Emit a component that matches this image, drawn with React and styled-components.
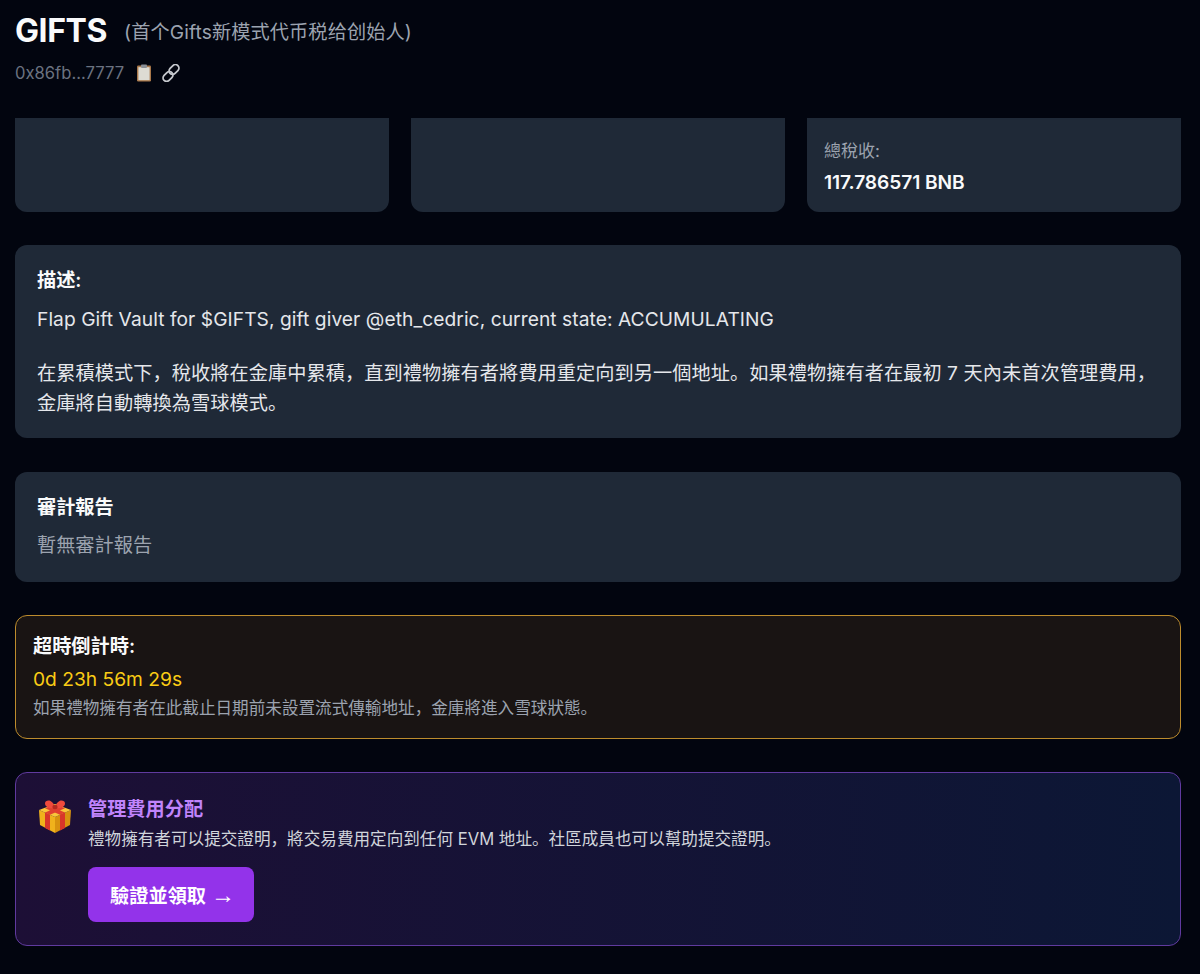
import React from "react"
import styled, { createGlobalStyle } from "styled-components"

const FONT = `Inter, "Noto Sans CJK SC", "Noto Sans CJK TC", sans-serif`

const GlobalStyle = createGlobalStyle`
  html, body {
    margin: 0;
    height: 974px;
    overflow: hidden;
    background: #02050f;
    font-family: ${FONT};
    color: #fff;
  }
  * { box-sizing: border-box; }
`

const Page = styled.div`
  height: 974px;
  overflow: hidden;
  display: flex;
  flex-direction: column;
  background: #02050f;
`

const Header = styled.header`
  height: 118px;
  flex: none;
  padding: 10px 19px 0 15px;
`

const TitleRow = styled.div`
  display: flex;
  align-items: center;
  height: 42px;
`

const Title = styled.h1`
  margin: 0;
  font-size: 32px;
  font-weight: 700;
  line-height: 42px;
  letter-spacing: -0.4px;
  color: #f9fafb;
`

const Subtitle = styled.span`
  margin-left: 17px;
  font-size: 19.2px;
  letter-spacing: 0.1px;
  color: #9ca3af;
`

const AddressRow = styled.div`
  display: flex;
  align-items: center;
  margin-top: 11px;
  height: 20px;
`

const Address = styled.span`
  font-size: 16.6px;
  color: #6b7280;
`

const IconSlot = styled.span`
  display: inline-flex;
  margin-left: ${p => p.$gap}px;
`

const Main = styled.main`
  flex: 1;
  padding: 0 19px 0 15px;
  display: flex;
  flex-direction: column;
`

const Stats = styled.section`
  display: grid;
  grid-template-columns: repeat(3, 1fr);
  gap: 22px;
  height: 94px;
`

const StatCard = styled.div`
  background: #1f2937;
  border-radius: 0 0 12px 12px;
  padding: 23px 17px 0;
  overflow: hidden;
`

const StatLabel = styled.div`
  font-size: 17px;
  line-height: 20px;
  color: #9ca3af;
`

// this label sits above the fold of the scrolled page, only its last pixels show
const ClippedLabel = styled(StatLabel)`
  margin-top: -41px;
`

const StatValue = styled.div`
  margin-top: 8px;
  font-size: 19.2px;
  line-height: 26px;
  font-weight: 600;
  letter-spacing: -0.1px;
  color: #f9fafb;
`

const Panel = styled.section`
  margin-top: ${p => p.$top}px;
  height: ${p => p.$height}px;
  background: #1f2937;
  border-radius: 12px;
  padding: 23px 22px 0;
`

const PanelTitle = styled.h2`
  margin: 0;
  font-size: 19.2px;
  line-height: 24px;
  font-weight: 600;
  color: #f9fafb;
`

const Body = styled.p`
  margin: ${p => p.$top}px 0 0;
  font-size: 19.2px;
  line-height: ${p => p.$line}px;
  letter-spacing: 0.06px;
  color: #e5e7eb;
`

const Muted = styled.p`
  margin: 12px 0 0;
  font-size: 19.2px;
  line-height: 28px;
  color: #9ca3af;
`

const Countdown = styled.section`
  margin-top: 33px;
  height: 124px;
  padding: 19px 17px 0;
  border: 1px solid #bd8c2d;
  border-radius: 12px;
  background: #191413;
`

const CountdownTitle = styled.h3`
  margin: 0;
  font-size: 19.2px;
  line-height: 22px;
  font-weight: 600;
  color: #f9fafb;
`

const CountdownValue = styled.div`
  margin-top: 9px;
  font-size: 19.2px;
  line-height: 26px;
  font-weight: 400;
  color: #facc15;
`

const CountdownNote = styled.p`
  margin: 6px 0 0;
  font-size: 16.6px;
  line-height: 20px;
  color: #9ca3af;
`

const Claim = styled.section`
  margin-top: 33px;
  height: 174px;
  padding: 22px 22px 0;
  display: flex;
  gap: 15px;
  border: 1px solid #603a9f;
  border-radius: 12px;
  background: linear-gradient(90deg, #1d0f36, #0c1735);
`

const GiftSlot = styled.div`
  flex: none;
  margin-top: 4px;
`

const ClaimBody = styled.div`
  display: flex;
  flex-direction: column;
  align-items: flex-start;
`

const ClaimTitle = styled.h3`
  margin: 0;
  font-size: 19.2px;
  line-height: 28px;
  font-weight: 600;
  color: #c084fc;
`

const ClaimText = styled.p`
  margin: 5px 0 0;
  font-size: 16.6px;
  line-height: 22px;
  color: #d1d5db;
`

const ClaimButton = styled.button`
  margin-top: 17px;
  height: 55px;
  width: 166px;
  padding: 0 0 0 3px;
  border: 0;
  border-radius: 8px;
  background: #9333ea;
  color: #fff;
  font: 600 19.2px ${FONT};
`

const Arrow = styled.span`
  font-family: "Liberation Sans", sans-serif;
  font-weight: 400;
  font-size: 24px;
`

const ClipboardIcon = () => (
  <svg width="16" height="18" viewBox="0 0 16 18">
    <rect x="1" y="1.500" width="14" height="16" rx="1.200" fill="#a9784a" />
    <rect x="2.400" y="3.200" width="11.200" height="13" fill="#dddbd3" />
    <rect x="5" y="0.500" width="6" height="3.400" rx="0.800" fill="#8a8f96" />
  </svg>
)

const LinkIcon = () => (
  <svg width="18" height="18" viewBox="0 0 18 18" fill="none" stroke="#c6c9ce" strokeWidth="1.800">
    <rect x="6.500" y="2" width="11" height="7" rx="3.500" transform="rotate(-45 12 5.500)" />
    <rect x="0.500" y="9" width="11" height="7" rx="3.500" transform="rotate(-45 6 12.500)" />
  </svg>
)

const GiftIcon = () => (
  <svg width="35" height="35" viewBox="0 0 35 35">
    <path d="M1 11 17 18V34L2 26Z" fill="#f0b21c" />
    <path d="M33 11 17 18V34L32 26Z" fill="#d8920f" />
    <path d="M1 11 17 5 33 11 17 18Z" fill="#f8c63a" />
    <path d="M7 13.600 12 15.800V31.500L7 29ZM22 15.800 27 13.600V29L22 31.500Z" fill="#d8362a" />
    <path d="M7 13.600 12 15.800 27 9.300 22 7.300ZM22 15.800 27 13.600 12 7.300 7 9.300Z" fill="#e0402f" />
    <path d="M17 9C12 10 7 8 7 4.500 7 1.500 10.500 1 12.500 2 15 3.200 16.500 6 17 9ZM17 9C22 10 27 8 27 4.500 27 1.500 23.500 1 21.500 2 19 3.200 17.500 6 17 9Z" fill="#ef4a3c" />
    <ellipse cx="17" cy="8" rx="2.600" ry="2.200" fill="#b52a20" />
  </svg>
)

export default function App() {
  return (
    <Page>
      <GlobalStyle />
      <Header>
        <TitleRow>
          <Title>GIFTS</Title>
          <Subtitle>(首个Gifts新模式代币税给创始人)</Subtitle>
        </TitleRow>
        <AddressRow>
          <Address>0x86fb...7777</Address>
          <IconSlot $gap={12}><ClipboardIcon /></IconSlot>
          <IconSlot $gap={10}><LinkIcon /></IconSlot>
        </AddressRow>
      </Header>
      <Main>
        <Stats>
          <StatCard>
            <ClippedLabel>總市值:</ClippedLabel>
          </StatCard>
          <StatCard />
          <StatCard>
            <StatLabel>總稅收:</StatLabel>
            <StatValue>117.786571 BNB</StatValue>
          </StatCard>
        </Stats>
        <Panel $top={33} $height={193}>
          <PanelTitle>描述:</PanelTitle>
          <Body $top={13} $line={28}>Flap Gift Vault for $GIFTS, gift giver @eth_cedric, current state: ACCUMULATING</Body>
          <Body $top={25} $line={30}>在累積模式下，稅收將在金庫中累積，直到禮物擁有者將費用重定向到另一個地址。如果禮物擁有者在最初 7 天內未首次管理費用，金庫將自動轉換為雪球模式。</Body>
        </Panel>
        <Panel $top={34} $height={110}>
          <PanelTitle>審計報告</PanelTitle>
          <Muted>暫無審計報告</Muted>
        </Panel>
        <Countdown>
          <CountdownTitle>超時倒計時:</CountdownTitle>
          <CountdownValue>0d 23h 56m 29s</CountdownValue>
          <CountdownNote>如果禮物擁有者在此截止日期前未設置流式傳輸地址，金庫將進入雪球狀態。</CountdownNote>
        </Countdown>
        <Claim>
          <GiftSlot><GiftIcon /></GiftSlot>
          <ClaimBody>
            <ClaimTitle>管理費用分配</ClaimTitle>
            <ClaimText>禮物擁有者可以提交證明，將交易費用定向到任何 EVM 地址。社區成員也可以幫助提交證明。</ClaimText>
            <ClaimButton>驗證並領取 <Arrow>→</Arrow></ClaimButton>
          </ClaimBody>
        </Claim>
      </Main>
    </Page>
  )
}
